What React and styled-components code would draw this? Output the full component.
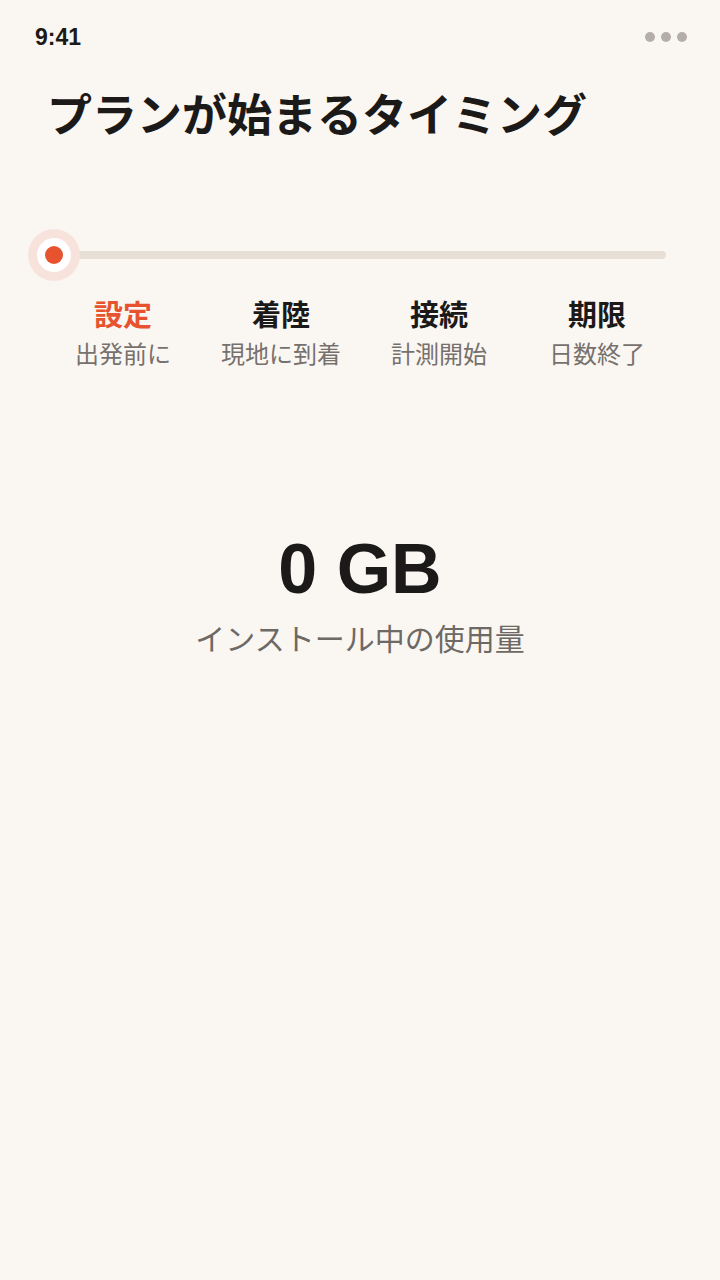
import styled, { createGlobalStyle } from "styled-components";

const GlobalStyle = createGlobalStyle`
  html, body {
    margin: 0;
    padding: 0;
    background: #faf7f3;
  }
  body {
    font-family: "Noto Sans CJK JP", "Noto Sans", sans-serif;
    color: #1c1a18;
  }
`;

const Screen = styled.div`
  width: 720px;
  min-height: 1280px;
  background: #faf7f3;
  display: flex;
  flex-direction: column;
`;

const StatusBar = styled.div`
  height: 74px;
  padding: 0 33px 0 35px;
  display: flex;
  align-items: center;
  justify-content: space-between;
`;

const Time = styled.span`
  font-family: "Liberation Sans", Arial, sans-serif;
  font-weight: 700;
  font-size: 23px;
  color: #1c1a18;
`;

const Dots = styled.div`
  display: flex;
  gap: 6px;
`;

const Dot = styled.span`
  width: 10px;
  height: 10px;
  border-radius: 50%;
  background: #b5aea8;
`;

const Title = styled.h1`
  margin: 13px 0 0 47px;
  font-size: 45px;
  line-height: 52px;
  font-weight: 700;
  color: #1c1a18;
`;

const Slider = styled.div`
  position: relative;
  margin: 90px 54px 0 28px;
  height: 52px;
  display: flex;
  align-items: center;
`;

const Track = styled.div`
  margin-left: 22px;
  flex: 1;
  height: 8px;
  border-radius: 4px;
  background: #e8dfd6;
`;

const Thumb = styled.div`
  position: absolute;
  left: 0;
  top: 0;
  width: 52px;
  height: 52px;
  border-radius: 50%;
  background: #f7e3dc;
  display: flex;
  align-items: center;
  justify-content: center;
`;

const ThumbRing = styled.div`
  width: 34px;
  height: 34px;
  border-radius: 50%;
  background: #ffffff;
  display: flex;
  align-items: center;
  justify-content: center;
`;

const ThumbDot = styled.div`
  width: 18px;
  height: 18px;
  border-radius: 50%;
  background: #e8532f;
`;

const Steps = styled.div`
  margin: 15px 44px 0;
  display: grid;
  grid-template-columns: repeat(4, 1fr);
`;

const Step = styled.div`
  display: flex;
  flex-direction: column;
  align-items: center;
`;

const StepName = styled.span`
  font-size: 29px;
  line-height: 34px;
  font-weight: 700;
  color: ${(p) => (p.$active ? "#e8532f" : "#1c1a18")};
`;

const StepNote = styled.span`
  margin-top: 8px;
  font-size: 24px;
  line-height: 30px;
  color: #77716d;
`;

const Usage = styled.div`
  margin-top: 166px;
  display: flex;
  flex-direction: column;
  align-items: center;
`;

const Amount = styled.div`
  font-family: "Liberation Sans", Arial, sans-serif;
  font-weight: 700;
  font-size: 70px;
  line-height: 70px;
  color: #1c1a18;
`;

const AmountLabel = styled.div`
  margin-top: 15px;
  font-size: 30px;
  line-height: 36px;
  color: #6e6965;
`;

const steps = [
  { name: "設定", note: "出発前に", active: true },
  { name: "着陸", note: "現地に到着" },
  { name: "接続", note: "計測開始" },
  { name: "期限", note: "日数終了" },
];

export default function App() {
  return (
    <>
      <GlobalStyle />
      <Screen>
        <StatusBar>
          <Time>9:41</Time>
          <Dots>
            <Dot />
            <Dot />
            <Dot />
          </Dots>
        </StatusBar>

        <Title>プランが始まるタイミング</Title>

        <Slider>
          <Track />
          <Thumb>
            <ThumbRing>
              <ThumbDot />
            </ThumbRing>
          </Thumb>
        </Slider>

        <Steps>
          {steps.map((s) => (
            <Step key={s.name}>
              <StepName $active={s.active}>{s.name}</StepName>
              <StepNote>{s.note}</StepNote>
            </Step>
          ))}
        </Steps>

        <Usage>
          <Amount>0 GB</Amount>
          <AmountLabel>インストール中の使用量</AmountLabel>
        </Usage>
      </Screen>
    </>
  );
}
